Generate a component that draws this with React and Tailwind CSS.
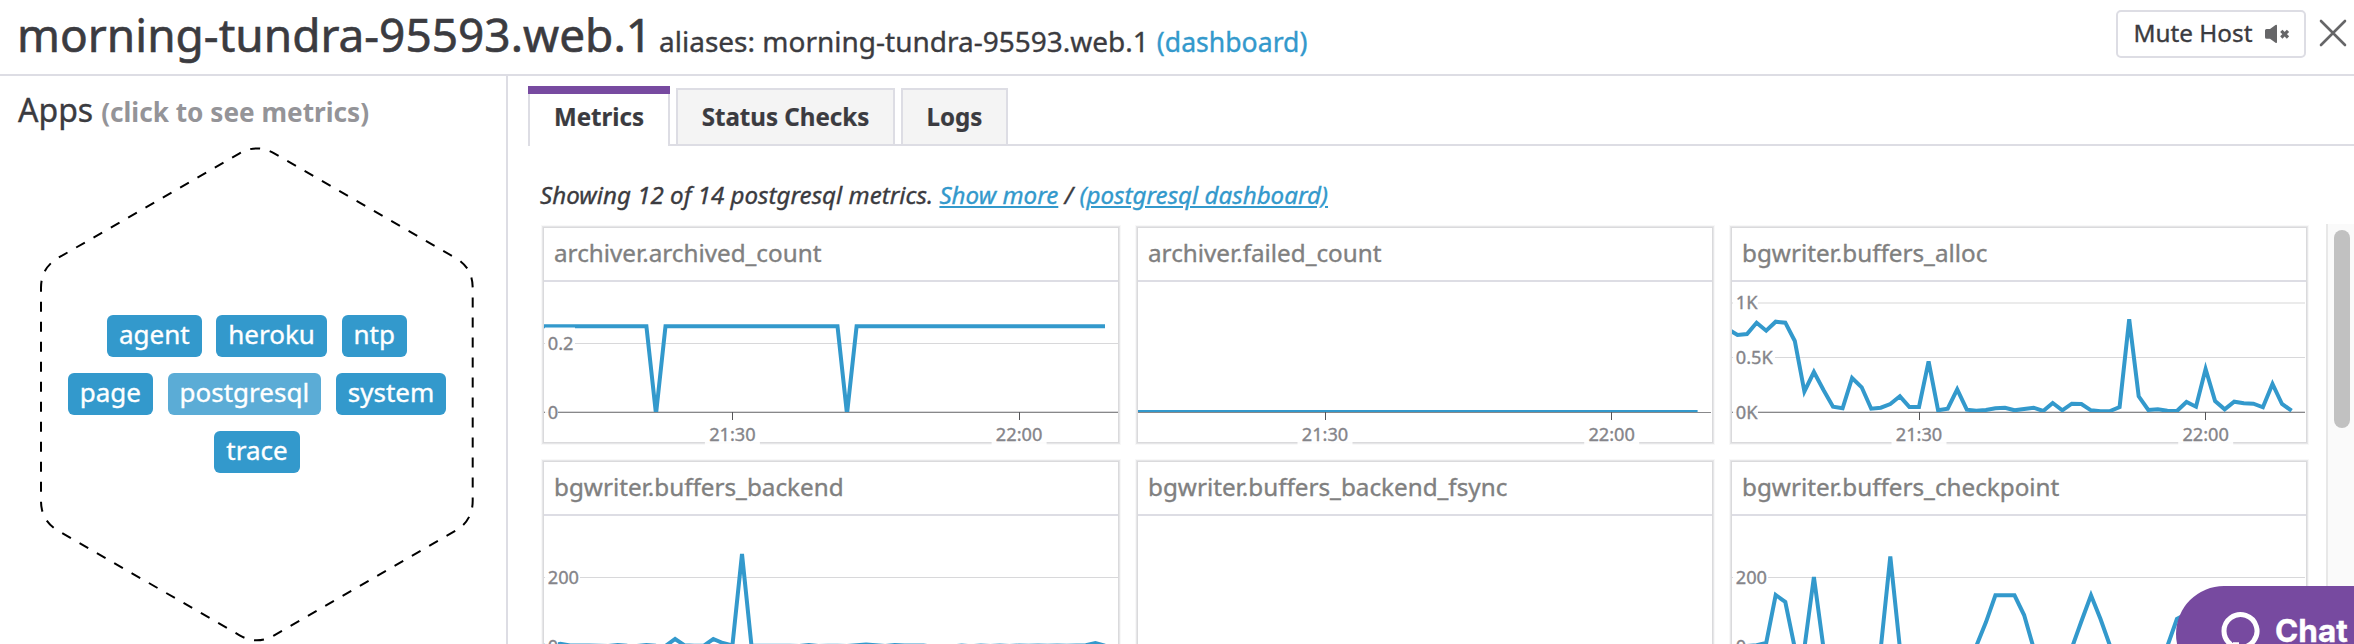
const STEP = 9.553;

// Values are vertical pixel positions inside the plot, one per minute starting at `from`.
const CHARTS = [
  {
    title: "archiver.archived_count",
    tick: 188.4,
    labels: [{ text: "0.2", y: 61, w: 31 }, { text: "0", y: 130, w: 14 }],
    from: -20,
    data: Array.from({ length: 60 }, (_, i) => (i === 12 || i === 32 ? 132 : 44.3)),
    axisEnd: 574,
  },
  {
    title: "archiver.failed_count",
    tick: 187,
    labels: [],
    from: -20,
    data: Array.from({ length: 60 }, () => 130),
    axisEnd: 573,
  },
  {
    title: "bgwriter.buffers_alloc",
    tick: 187,
    labels: [{ text: "1K", y: 20, w: 26, soft: true }, { text: "0.5K", y: 75, w: 43 }, { text: "0K", y: 130, w: 26 }],
    from: -20,
    data: [
      47, 53, 52, 40.7, 48.7, 39.7, 40.7, 59, 109.5, 90, 108, 124.7, 126.3, 96, 105.3, 126.7, 125.7, 122, 114.3, 125, 125,
      79.3, 128.3, 126.7, 107.3, 127.7, 128.7, 128, 126.3, 125.7, 128.3, 127, 125.7, 129, 121, 128.3, 121.7, 122, 128.3,
      129.3, 129, 125, 37.3, 114.3, 128, 127.3, 128.7, 129, 120, 124.7, 87, 119, 127.3, 119.7, 121.3, 121.7, 125.3, 102,
      122, 128.7,
    ],
    axisEnd: 573,
  },
  {
    title: "bgwriter.buffers_backend",
    tick: 188.4,
    labels: [{ text: "200", y: 61, w: 36 }, { text: "0", y: 130, w: 14 }],
    from: -20,
    data: [
      129.7, 129.7, 127.8, 129.5, 129.5, 129.5, 129.7, 130, 129, 129.8, 130, 129, 129.7, 130, 123, 129.3, 129.8, 129.8,
      123, 127, 129.5, 38, 129.8, 129.8, 129.8, 129.8, 129.8, 130, 129, 130, 129.8, 129.8, 130, 129.3, 128.6, 129.3,
      130, 129, 129.6, 129.6, 129.6, 130.6, 130.6, 130.4, 129.6, 130.2, 129.5, 130, 129.5, 130, 129.5, 129.8, 129.6,
      129.8, 129.6, 129.8, 129.6, 129.3, 127, 129.6,
    ],
    axisEnd: 574,
  },
  { title: "bgwriter.buffers_backend_fsync", tick: 187, labels: [], from: -20, data: Array.from({ length: 60 }, () => 130), axisEnd: 573 },
  {
    title: "bgwriter.buffers_checkpoint",
    tick: 187,
    labels: [{ text: "200", y: 61, w: 36 }, { text: "0", y: 130, w: 14 }],
    from: -20,
    data: [
      130, 130, 130, 129.3, 127, 79, 86, 132, 132, 61, 132, 132, 132, 132, 132, 132, 132, 40.5, 132, 132, 132, 132, 132,
      132, 132, 132, 130, 106.3, 79.3, 79.3, 79.3, 99, 132, 132, 132, 132, 132, 105.3, 79.3, 103, 130, 132, 132, 132,
      132, 132, 130, 103, 98, 98, 110, 132, 132,
    ],
    axisEnd: 573,
  },
];

function Chart({ chart, id }) {
  const points = chart.data.map((v, i) => `${(chart.tick + (chart.from + i) * STEP).toFixed(1)},${v}`).join(" ");
  return (
    <svg width="574" height="160" className="block overflow-visible" fontFamily="'Noto Sans', sans-serif" fontSize="18.2" fill="#85858a">
      <clipPath id={id}>
        <rect x="0" y="0" width="574" height="130" />
      </clipPath>
      {chart.labels.map((l) => (
        <rect key={l.text} x="0" y={l.y === 130 ? 129 : l.y} width={chart.axisEnd} height={l.soft ? 2 : 1} fill={l.soft ? "#ebebeb" : "#d8d8da"} />
      ))}
      <rect x="0" y="130" width={chart.axisEnd} height="1" fill="#88888a" />
      <polyline points={points} fill="none" stroke="#3399cc" strokeWidth="4" clipPath={`url(#${id})`} />
      {chart.labels.map((l) => (
        <g key={l.text}>
          <rect x="1" y={l.y - 15.5} width={l.w - 1} height="29" fill="#ffffff" fillOpacity="0.93" />
          <text x="3.8" y={l.y + 6.5} stroke="#85858a" strokeWidth="0.35">{l.text}</text>
        </g>
      ))}
      {["21:30", "22:00"].map((t, i) => {
        const x = chart.tick + i * 286.7;
        return (
          <g key={t}>
            <rect x={Math.floor(x)} y="130" width="1" height="8" fill="#555558" />
            <rect x={x - 27.5} y="139" width="55" height="25" fill="#ffffff" fillOpacity="0.9" />
            <text x={x} y="159" textAnchor="middle" stroke="#85858a" strokeWidth="0.35">{t}</text>
          </g>
        );
      })}
    </svg>
  );
}

function Card({ chart, id }) {
  return (
    <section className="h-[214px] w-[574px] bg-white shadow-[0_0_0_1px_#dadadc,0_0_0_2px_#e6e6e8,0_0_0_3px_#f8f8f8]">
      <h3 className="h-[54px] border-b-2 border-[#dddde4] pl-2.5 text-[24.25px] leading-[49px] text-[#808080]">{chart.title}</h3>
      <Chart chart={chart} id={id} />
    </section>
  );
}

const TAGS = [["agent", "heroku", "ntp"], ["page", "postgresql", "system"], ["trace"]];

export default function App() {
  return (
    <div className="relative flex h-[644px] w-[2354px] flex-col overflow-hidden bg-white font-['Noto_Sans',sans-serif] whitespace-nowrap text-[#3b3b40] [-webkit-text-stroke:0.35px]">
      <header className="flex h-[76px] shrink-0 justify-between border-b-2 border-[#dddde4] pr-[7px] pl-[17px]">
        <div className="flex items-baseline">
          <h1 className="text-[46px] leading-[68px] [-webkit-text-stroke:0.6px]">morning-tundra-95593.web.1</h1>
          <span className="ml-[7px] text-[28px]">aliases: morning-tundra-95593.web.1</span>
          <a className="ml-[8px] text-[26.6px] text-[#3399cc]">(dashboard)</a>
        </div>
        <div className="flex">
          <button className="mt-2.5 flex h-12 w-[190px] rounded-[5px] border-2 border-[#dddde4] pl-[15.5px] text-[24.3px] leading-[41px]">
            Mute Host
            <svg className="mt-3 ml-[12px]" width="26" height="20" viewBox="2263 24 26 20">
              <path d="M2264 30.5q0-1.5 1.5-1.5h3.5l5.500-4q1.500-.600 1.500 .800v16.200q0 1.400-1.500 .700l-5.500-4h-3.500q-1.500 0-1.500-1.500z" fill="#666668" />
              <path d="M2280.300 30.800l6.700 6.700M2287 30.800l-6.700 6.700" stroke="#666668" strokeWidth="3.200" />
            </svg>
          </button>
          <svg className="mt-[19px] ml-[13px]" width="28" height="28" viewBox="0 0 28 28">
            <path d="M2 2l24 24M26 2l-24 24" stroke="#666668" strokeWidth="2.600" strokeLinecap="round" />
          </svg>
        </div>
      </header>

      <div className="flex min-h-0 flex-1">
        <aside className="w-[508px] shrink-0 border-r-2 border-[#dddde4]">
          <h2 className="flex h-[67px] items-baseline pl-[18px] text-[32px] leading-[67px]">
            Apps <span className="ml-[8px] text-[26.2px] font-bold text-[#949498] [-webkit-text-stroke:0px]">(click to see metrics)</span>
          </h2>
          <div className="grid">
            <svg className="col-start-1 row-start-1" width="506" height="501" viewBox="0 143 506 501">
              <path
                d="M41 287.800V500.800Q41 520.800 58.300 530.800L239.600 635.300Q256.900 645.300 274.200 635.300L455.400 530.800Q472.700 520.800 472.700 500.800V287.800Q472.700 267.800 455.400 257.800L274.200 153.400Q256.900 143.400 239.600 153.400L58.300 257.800Q41 267.800 41 287.800"
                fill="none" stroke="#000" strokeWidth="2" strokeDasharray="10 10" strokeDashoffset="6.100"
              />
            </svg>
            <div className="col-start-1 row-start-1 flex w-[506px] flex-col gap-4 pt-[172px] pl-2">
              {TAGS.map((row) => (
                <div key={row[0]} className="flex justify-center gap-[14.6px]">
                  {row.map((tag) => (
                    <span
                      key={tag}
                      className={
                        tag === "postgresql"
                          ? "h-[42px] rounded-md bg-[#5bacd6] px-3 text-[26px] leading-[38px] text-white"
                          : "h-[42px] rounded-md bg-[#3399cc] px-3 text-[26px] leading-[38px] text-white"
                      }
                    >
                      {tag}
                    </span>
                  ))}
                </div>
              ))}
            </div>
          </div>
        </aside>

        <main className="flex min-w-0 flex-1 flex-col">
          <nav className="mt-2.5 flex h-[60px] shrink-0 pl-5 text-[24.1px] font-bold [-webkit-text-stroke:0.2px]">
            <div className="flex h-[60px] w-[142px] flex-col">
              <div className="h-2 bg-[#774aa0]" />
              <div className="flex-1 border-x-2 border-[#dddde4] text-center leading-[45px]">Metrics</div>
            </div>
            <div className="flex flex-1 items-end gap-1.5 border-b-2 border-[#dddde4] pl-1.5">
              <div className="h-14 w-[219px] border-2 border-b-0 border-[#dddde4] bg-[#f4f4f4] text-center leading-[53px]">Status Checks</div>
              <div className="h-14 w-[107px] border-2 border-b-0 border-[#dddde4] bg-[#f4f4f4] text-center leading-[53px]">Logs</div>
            </div>
          </nav>
          <p className="mt-[30px] mb-[11px] shrink-0 pl-[32px] text-[24.15px] leading-[37px] italic">
            Showing 12 of 14 postgresql metrics. <a className="text-[#3399cc] underline">Show more</a> /{" "}
            <a className="text-[#3399cc] underline">(postgresql dashboard)</a>
          </p>
          <div className="flex min-h-0 flex-1 justify-between">
            <div className="grid h-[452px] grid-cols-[574px_574px_574px] content-start gap-5 pt-1 pl-9">
              {CHARTS.map((c, i) => (
                <Card key={c.title} chart={c} id={`plot-${i}`} />
              ))}
            </div>
            <div className="w-7 border-l-2 border-[#e8e8e8] bg-[#fafafa] pt-1.5 pl-1.5">
              <div className="h-[198px] w-4 rounded-full bg-[#c1c1c1]" />
            </div>
          </div>
        </main>
      </div>

      <button className="absolute top-[586px] left-[2176px] flex h-24 w-[220px] rounded-l-[48px] bg-[#774aa0] pl-[43px] font-['Inter',sans-serif] text-[31.5px] leading-[89px] font-bold text-white">
        <svg className="mt-6" width="42" height="42" viewBox="0 0 42 42" fill="none" stroke="#fff" strokeWidth="5">
          <path d="M12 34.500A16.500 16.500 0 1 1 21 37.500L13 41V33" />
          <path d="M14 33.500h6" strokeWidth="2.500" />
        </svg>
        <span className="ml-[14px]">Chat</span>
      </button>
    </div>
  );
}
